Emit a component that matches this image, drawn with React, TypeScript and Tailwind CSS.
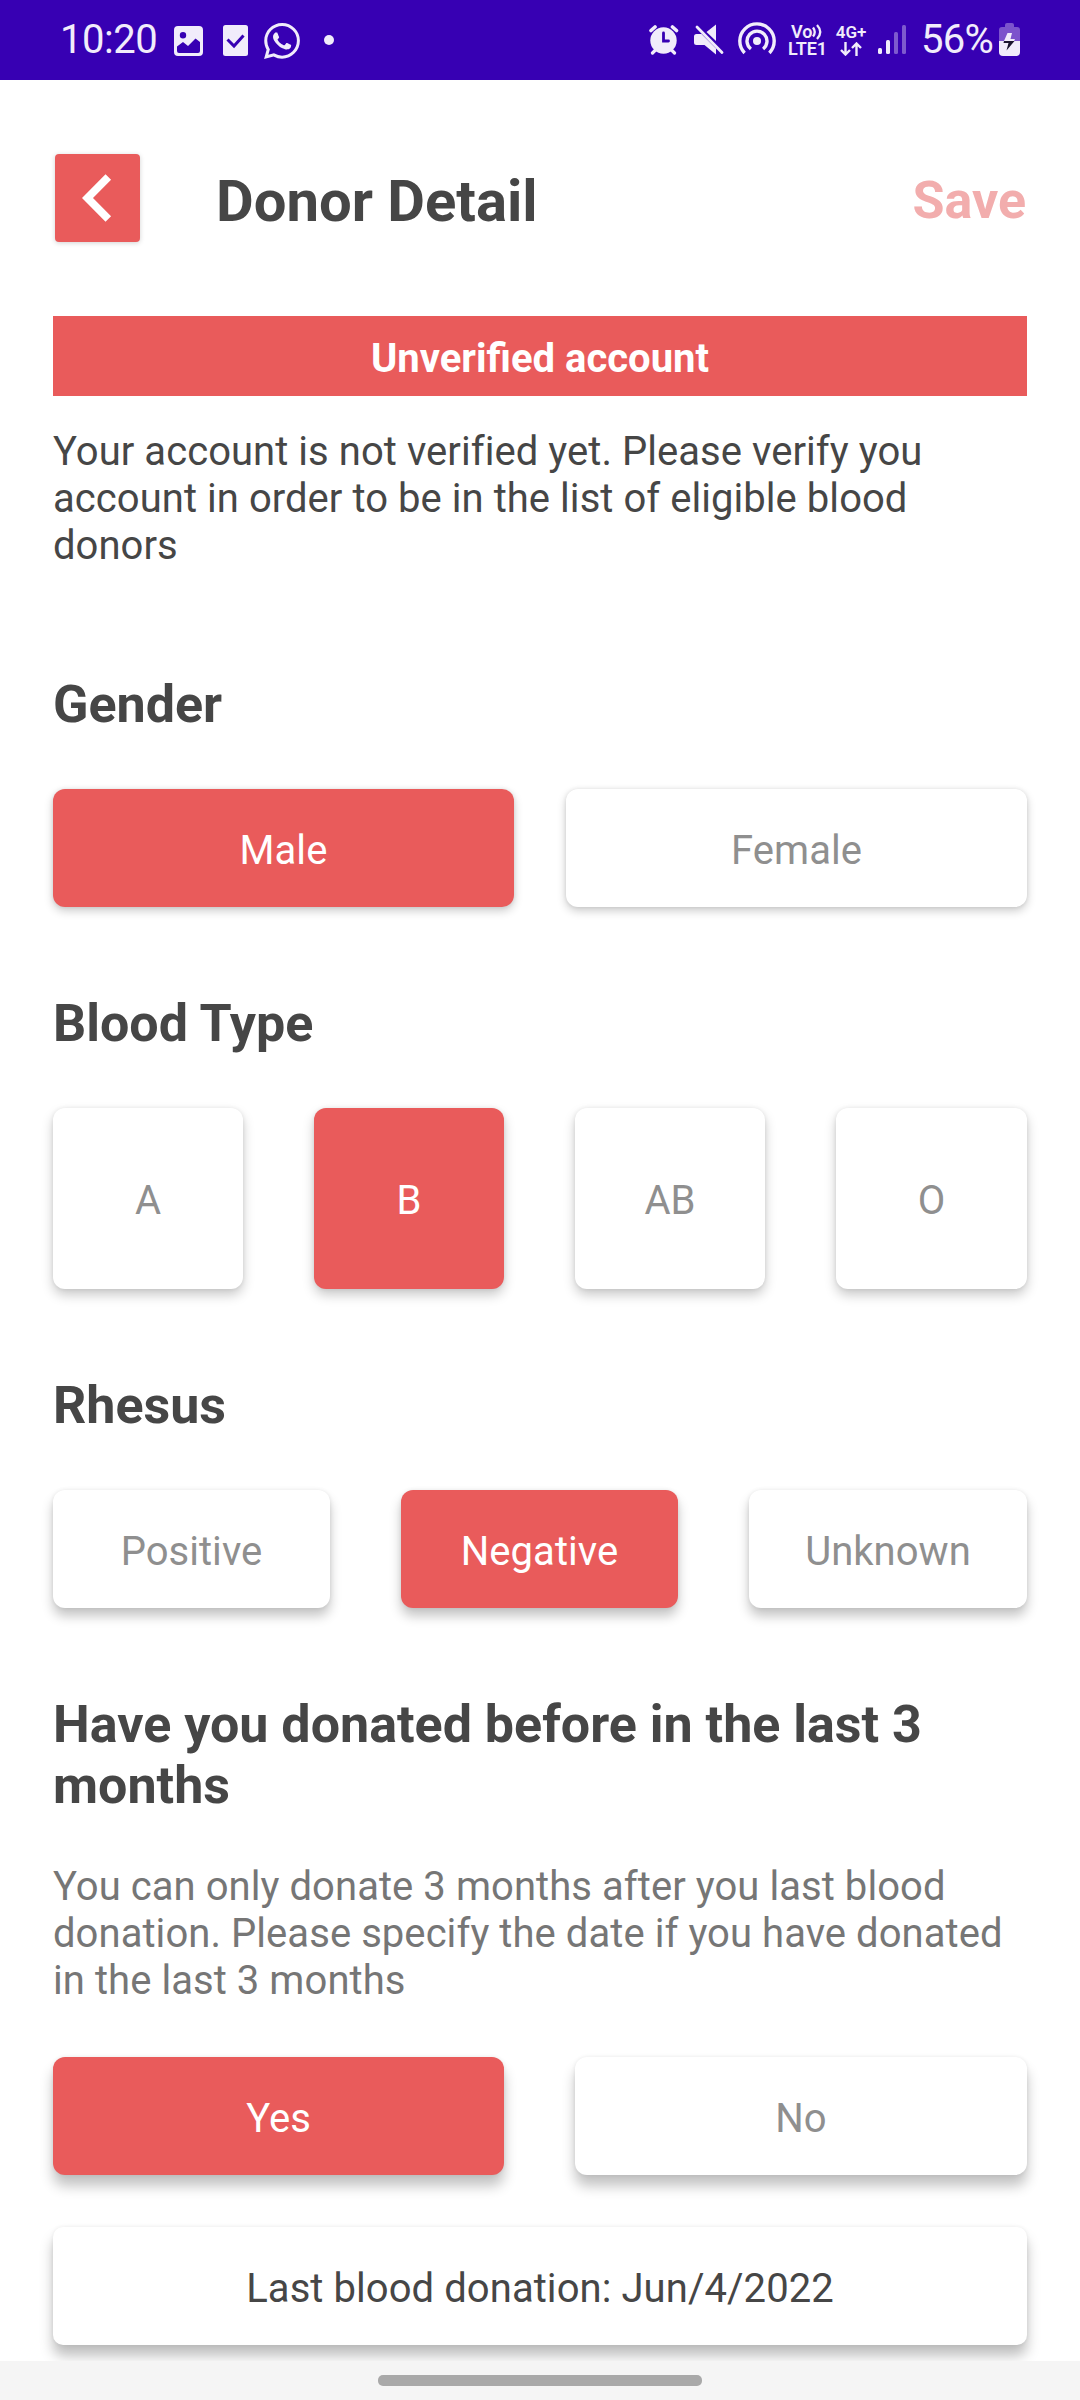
import React from "react";

const INK = "#f1ecfb";

function PictureIcon() {
  return (
    <svg className="block h-[30px] w-[29px]" viewBox="0 0 29 30">
      <path
        fillRule="evenodd"
        fill={INK}
        d="M4 0H25a4 4 0 0 1 4 4V26a4 4 0 0 1-4 4H4a4 4 0 0 1-4-4V4a4 4 0 0 1 4-4ZM9 6a3.200 3.200 0 1 0 0 6.400A3.200 3.200 0 0 0 9 6ZM3 20.500V25a2 2 0 0 0 2 2H24a2 2 0 0 0 2-2V16L21.500 12.500 14 20 9 16Z"
      />
    </svg>
  );
}

function TaskIcon() {
  return (
    <svg className="block h-[31px] w-[25px]" viewBox="0 0 25 31">
      <rect width="25" height="31" rx="2.500" fill={INK} />
      <path d="M4.500 14.500l6.500 6.500L20.500 10.500" fill="none" stroke="#3700b3" strokeWidth="3" />
    </svg>
  );
}

function WhatsAppIcon() {
  return (
    <svg className="block h-[36px] w-[36px]" viewBox="0 0 24 24" fill={INK}>
      <path d="M17.472 14.382c-.297-.149-1.758-.867-2.030-.967-.273-.099-.471-.148-.670.150-.197.297-.767.966-.940 1.164-.173.199-.347.223-.644.075-.297-.150-1.255-.463-2.390-1.475-.883-.788-1.480-1.761-1.653-2.059-.173-.297-.018-.458.130-.606.134-.133.298-.347.446-.520.149-.174.198-.298.298-.497.099-.198.050-.371-.025-.520-.075-.149-.669-1.612-.916-2.207-.242-.579-.487-.500-.669-.510-.173-.008-.371-.010-.570-.010-.198 0-.520.074-.792.372-.272.297-1.040 1.016-1.040 2.479 0 1.462 1.065 2.875 1.213 3.074.149.198 2.096 3.200 5.077 4.487.709.306 1.262.489 1.694.625.712.227 1.360.195 1.871.118.571-.085 1.758-.719 2.006-1.413.248-.694.248-1.289.173-1.413-.074-.124-.272-.198-.570-.347m-5.421 7.403h-.004a9.870 9.870 0 0 1-5.031-1.378l-.361-.214-3.741.982.998-3.648-.235-.374a9.860 9.860 0 0 1-1.510-5.260c.001-5.450 4.436-9.884 9.888-9.884 2.640 0 5.122 1.030 6.988 2.898a9.825 9.825 0 0 1 2.893 6.994c-.003 5.450-4.437 9.884-9.885 9.884m8.413-18.297A11.815 11.815 0 0 0 12.050 0C5.495 0 .160 5.335.157 11.892c0 2.096.547 4.142 1.588 5.945L.057 24l6.305-1.654a11.882 11.882 0 0 0 5.683 1.448h.005c6.554 0 11.890-5.335 11.893-11.893a11.821 11.821 0 0 0-3.480-8.413Z" />
    </svg>
  );
}

function AlarmIcon() {
  return (
    <svg className="block h-[30px] w-[30px]" viewBox="0 0 30 30" fill="none" stroke={INK} strokeLinecap="round">
      <circle cx="14.500" cy="15.500" r="13.200" fill={INK} stroke="none" />
      <path d="M2 5.500L6 2M27.500 5.500L23.500 2" strokeWidth="3.600" />
      <path d="M3.500 28L7 24.500M25.500 28L22 24.500" strokeWidth="3.200" />
      <path d="M14.500 8V16H19.500" stroke="#3700b3" strokeWidth="2.800" />
    </svg>
  );
}

function MuteIcon() {
  return (
    <svg className="block h-[31px] w-[30px]" viewBox="0 0 30 31" fill={INK}>
      <path d="M12.500 8L22 0.500V17ZM0 12.500Q0 10 2.500 10H7.500L22 24.500V30.500L10.500 21H2.500Q0 21 0 18.500Z" />
      <path d="M3 3L28 28.500" stroke={INK} strokeWidth="2.800" strokeLinecap="round" />
    </svg>
  );
}

function HotspotIcon() {
  return (
    <svg className="block h-[33px] w-[38px]" viewBox="0 0 38 33" fill="none" stroke={INK} strokeWidth="3.400">
      <circle cx="19" cy="19" r="4" fill={INK} stroke="none" />
      <path d="M12.900 27A10 10 0 1 1 25.100 27" />
      <path d="M6.600 31A17.200 17.200 0 1 1 31.400 31" />
    </svg>
  );
}

function VolteIcon() {
  return (
    <div className="flex w-[39px] flex-col whitespace-nowrap text-[18px] font-semibold leading-[17px]">
      <div className="flex items-center pl-[3px]">
        <span>Vo</span>
        <svg className="h-[16px] w-[11px] shrink-0" viewBox="0 0 11 16" fill="none" stroke={INK} strokeWidth="2.300">
          <path d="M1 3.500Q4.500 8 1 12.500M5 1Q11.500 8 5 15" />
        </svg>
      </div>
      <span>LTE1</span>
    </div>
  );
}

function DataIcon() {
  return (
    <div className="flex w-[32px] flex-col items-center whitespace-nowrap text-[17px] font-semibold leading-[17px]">
      <span>4G+</span>
      <svg className="mt-px h-[14px] w-[22px]" viewBox="0 0 22 14" fill="none" stroke={INK} strokeWidth="2.400">
        <path d="M5.500 0V13M1 8L5.500 12.500 10 8M16.500 14V1M12 6L16.500 1.500 21 6" />
      </svg>
    </div>
  );
}

function SignalIcon() {
  return (
    <svg className="block h-[30px] w-[28px]" viewBox="0 0 28 30" fill={INK}>
      <rect x="0" y="23" width="4" height="6" rx="1.500" />
      <rect x="8" y="15" width="4" height="14" rx="1.500" />
      <rect x="16" y="7" width="4" height="22" rx="1.500" opacity=".38" />
      <rect x="24" y="0" width="4" height="29" rx="1.500" opacity=".38" />
    </svg>
  );
}

function BatteryIcon() {
  return (
    <svg className="block h-[33px] w-[21px]" viewBox="0 0 21 33">
      <path d="M6 2Q6 0 8 0H13Q15 0 15 2V4H18Q21 4 21 7V18H0V7Q0 4 3 4H6Z" fill="#7c53cc" />
      <path d="M0 18H21V29Q21 33 17 33H4Q0 33 0 29Z" fill={INK} />
      <path d="M8.500 10H13L11.500 16H16L15 18H5Z" fill={INK} />
      <path d="M5 18H15.500L7.500 27.500 9.500 20H4.500Z" fill="#1b1530" />
    </svg>
  );
}

function StatusBar() {
  return (
    <header className="flex h-20 shrink-0 items-start bg-[#3700b3] text-[#f1ecfb]">
      <div className="ml-[60px] mt-[16px] w-[98px] whitespace-nowrap text-[40px] leading-[48px] tracking-[-0.500px]">10:20</div>
      <div className="ml-[16px] mt-[26px]"><PictureIcon /></div>
      <div className="ml-[20px] mt-[25px]"><TaskIcon /></div>
      <div className="ml-[16px] mt-[23px]"><WhatsAppIcon /></div>
      <div className="ml-[24px] mt-[35px] size-[10px] rounded-full bg-[#f1ecfb]" />
      <div className="ml-auto mt-[25px]"><AlarmIcon /></div>
      <div className="ml-[15px] mt-[24px]"><MuteIcon /></div>
      <div className="ml-[14px] mt-[22px]"><HotspotIcon /></div>
      <div className="ml-[12px] mt-[23px]"><VolteIcon /></div>
      <div className="ml-[8px] mt-[24px]"><DataIcon /></div>
      <div className="ml-[11px] mt-[25px]"><SignalIcon /></div>
      <div className="ml-[15px] mt-[16px] w-[75px] whitespace-nowrap text-[40px] leading-[48px] tracking-[-0.700px]">56%</div>
      <div className="ml-[3px] mr-[60px] mt-[23px]"><BatteryIcon /></div>
    </header>
  );
}

const SHADOWS = [
  "shadow-[0_4px_10px_rgba(0,0,0,0.20),0_0_4px_rgba(0,0,0,0.09)]",
  "shadow-[0_6px_12px_rgba(0,0,0,0.21),0_0_4px_rgba(0,0,0,0.08)]",
  "shadow-[0_8px_12px_rgba(0,0,0,0.23),0_0_4px_rgba(0,0,0,0.08)]",
  "shadow-[0_11px_13px_rgba(0,0,0,0.24),0_0_4px_rgba(0,0,0,0.08)]",
];

type ChoiceProps = {
  options: string[];
  selected: string;
  depth: number;
  className: string;
};

function Choices({ options, selected, depth, className }: ChoiceProps) {
  return (
    <div className={`grid shrink-0 ${className}`}>
      {options.map((option) => (
        <button
          key={option}
          className={`flex items-center justify-center rounded-[12px] pt-[5px] text-[40px] tracking-[0.040px] ${SHADOWS[depth]} ${
            option === selected ? "bg-[#e95b5b] text-white" : "bg-white text-[#8f8f8f]"
          }`}
        >
          {option}
        </button>
      ))}
    </div>
  );
}

function Heading({ children, className }: { children: React.ReactNode; className: string }) {
  return (
    <h2 className={`shrink-0 text-[52px] font-bold leading-[61px] text-[#464646] ${className}`}>{children}</h2>
  );
}

export default function App() {
  return (
    <div className="flex h-[2400px] w-[1080px] flex-col overflow-hidden bg-white font-['Roboto',sans-serif] text-[#464646]">
      <StatusBar />
      <main className="flex min-h-0 flex-1 flex-col overflow-hidden px-[53px]">
        <div className="mt-[74px] flex h-[88px] shrink-0 items-center">
          <button className="ml-[2px] flex h-[88px] w-[85px] items-center justify-center rounded-[4px] bg-[#e95b5b] shadow-[0_1px_5px_rgba(0,0,0,0.18)]">
            <svg className="mr-[2px] h-[48px] w-[30px]" viewBox="0 0 30 48" fill="none" stroke="white" strokeWidth="7.800">
              <path d="M26.300 3L5.500 24 26.300 45" />
            </svg>
          </button>
          <h1 className="ml-[76px] mt-[5px] text-[58px] font-bold leading-[68px]">Donor Detail</h1>
          <button className="ml-auto mr-px mt-[6px] text-[52px] font-bold leading-[62px] text-[#f2adad]">Save</button>
        </div>
        <div className="mt-[74px] flex h-20 shrink-0 items-center justify-center bg-[#e95b5b] pt-[5px] text-[40px] font-bold text-white">
          Unverified account
        </div>
        <p className="mt-[32px] h-[141px] shrink-0 text-[40px] leading-[47px] tracking-[0.050px]">
          Your account is not verified yet. Please verify you<br />account in order to be in the list of eligible blood<br />donors
        </p>
        <Heading className="mt-[105px]">Gender</Heading>
        <Choices className="mt-[54px] h-[118px] grid-cols-2 gap-[52px]" options={["Male", "Female"]} selected="Male" depth={0} />
        <Heading className="mt-[86px]">Blood Type</Heading>
        <Choices className="mt-[54px] h-[181px] grid-cols-[190px_190px_190px_191px] gap-[71px]" options={["A", "B", "AB", "O"]} selected="B" depth={1} />
        <Heading className="mt-[86px]">Rhesus</Heading>
        <Choices className="mt-[54px] h-[118px] grid-cols-[277px_277px_278px] gap-[71px]" options={["Positive", "Negative", "Unknown"]} selected="Negative" depth={2} />
        <Heading className="mt-[86px]">
          Have you donated before in the last 3<br />months
        </Heading>
        <p className="mt-[47px] shrink-0 text-[40px] leading-[47px] tracking-[0.060px] text-[#767676]">
          You can only donate 3 months after you last blood<br />donation. Please specify the date if you have donated<br />in the last 3 months
        </p>
        <Choices className="mt-[53px] h-[118px] grid-cols-[451px_452px] gap-[71px]" options={["Yes", "No"]} selected="Yes" depth={3} />
        <button className="mt-[52px] h-[118px] shrink-0 rounded-[10px] bg-white pt-[5px] text-[40px] tracking-[0.070px] shadow-[0_11px_13px_rgba(0,0,0,0.25),0_0_4px_rgba(0,0,0,0.08)]">
          Last blood donation: Jun/4/2022
        </button>
      </main>
      <footer className="flex h-[39px] shrink-0 items-center justify-center bg-[#f5f5f5]">
        <div className="h-[11px] w-[324px] rounded-[5px] bg-[#a9a9a9]" />
      </footer>
    </div>
  );
}
